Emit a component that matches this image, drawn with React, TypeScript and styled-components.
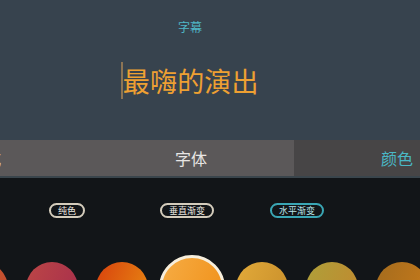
import { createGlobalStyle } from "styled-components";
import styled from "styled-components";

const GlobalStyle = createGlobalStyle`
  html, body {
    margin: 0;
    padding: 0;
    background: #121518;
  }
  body {
    font-family: "Noto Sans CJK SC", "Noto Sans", sans-serif;
    overflow: hidden;
  }
`;

const tabs = [
  { label: "样式", active: false },
  { label: "字体", active: false },
  { label: "颜色", active: true },
];

const modes = [
  { label: "纯色", active: false },
  { label: "垂直渐变", active: false },
  { label: "水平渐变", active: true },
];

const swatches = [
  { from: "#d0602c", to: "#c04a30", selected: false },
  { from: "#bc4646", to: "#a62e4c", selected: false },
  { from: "#d8420e", to: "#e88a12", selected: false },
  { from: "#f6ac44", to: "#f09018", selected: true },
  { from: "#e2aa3a", to: "#c88e2a", selected: false },
  { from: "#aea03a", to: "#c2882e", selected: false },
  { from: "#a46c1e", to: "#c87a1a", selected: false },
];

function App() {
  return (
    <Page>
      <GlobalStyle />
      <Preview>
        <Caption>字幕</Caption>
        <Line>
          <Cursor />
          <Subtitle>最嗨的演出</Subtitle>
        </Line>
      </Preview>
      <TabBar>
        <TabStrip>
          {tabs.map((t) => (
            <Tab key={t.label} $active={t.active}>
              {t.label}
            </Tab>
          ))}
        </TabStrip>
      </TabBar>
      <Panel>
        <Modes>
          {modes.map((m) => (
            <ModeCell key={m.label}>
              <Pill $active={m.active}>{m.label}</Pill>
            </ModeCell>
          ))}
        </Modes>
        <Swatches>
          {swatches.map((s, i) => (
            <SwatchCell key={i}>
              <Swatch
                $selected={s.selected}
                style={{
                  background: `linear-gradient(110deg, ${s.from}, ${s.to})`,
                }}
              />
            </SwatchCell>
          ))}
        </Swatches>
      </Panel>
    </Page>
  );
}

export default App;

const Page = styled.div`
  width: 420px;
  height: 280px;
  overflow: hidden;
  display: flex;
  flex-direction: column;
`;

const Preview = styled.div`
  flex: 0 0 140px;
  background-color: #37434e;
  display: flex;
  flex-direction: column;
  align-items: center;
  padding-right: 40px;
  box-sizing: border-box;
`;

const Caption = styled.div`
  margin-top: 20px;
  font-size: 12px;
  line-height: 14px;
  color: #4fb6c6;
`;

const Line = styled.div`
  margin-top: 28px;
  display: flex;
  align-items: stretch;
  height: 37px;
`;

const Cursor = styled.div`
  width: 1.5px;
  background-color: #8c7454;
`;

const Subtitle = styled.div`
  font-size: 27px;
  line-height: 37px;
  color: #eea032;
  letter-spacing: 0.2px;
`;

const TabBar = styled.div`
  flex: 0 0 38px;
  box-sizing: border-box;
  overflow: hidden;
  border-bottom: 2px solid #3a454c;
`;

const TabStrip = styled.div`
  display: flex;
  height: 100%;
  margin-left: -118px;
`;

const Tab = styled.div<{ $active: boolean }>`
  flex: 0 0 206px;
  display: flex;
  align-items: center;
  justify-content: center;
  font-size: 16px;
  background-color: ${(p) => (p.$active ? "#474546" : "#5b5859")};
  color: ${(p) => (p.$active ? "#4ab8c6" : "#e8e6e4")};
`;

const Panel = styled.div`
  flex: 0 0 auto;
  background-color: #121518;
  display: flex;
  flex-direction: column;
`;

const Modes = styled.div`
  margin-top: 25px;
  padding-left: 7px;
  display: grid;
  grid-template-columns: 120px 120px 100px;
  height: 15px;
`;

const ModeCell = styled.div`
  display: flex;
  justify-content: center;
`;

const Pill = styled.div<{ $active: boolean }>`
  height: 15px;
  box-sizing: border-box;
  padding: 0 7px;
  border-radius: 8px;
  border: 2px solid ${(p) => (p.$active ? "#3aa6b4" : "#d4ccbc")};
  color: ${(p) => (p.$active ? "#b8e4ea" : "#ece8e0")};
  font-size: 9px;
  line-height: 11px;
  display: flex;
  align-items: center;
  white-space: nowrap;
`;

const Swatches = styled.div`
  margin-top: 37px;
  margin-left: -53px;
  display: flex;
  height: 66px;
`;

const SwatchCell = styled.div`
  flex: 0 0 70px;
  display: flex;
  align-items: center;
  justify-content: center;
`;

const Swatch = styled.div<{ $selected: boolean }>`
  width: ${(p) => (p.$selected ? "66px" : "52px")};
  height: ${(p) => (p.$selected ? "66px" : "52px")};
  border-radius: 50%;
  box-sizing: border-box;
  border: ${(p) => (p.$selected ? "3px solid #f6eedc" : "none")};
`;
